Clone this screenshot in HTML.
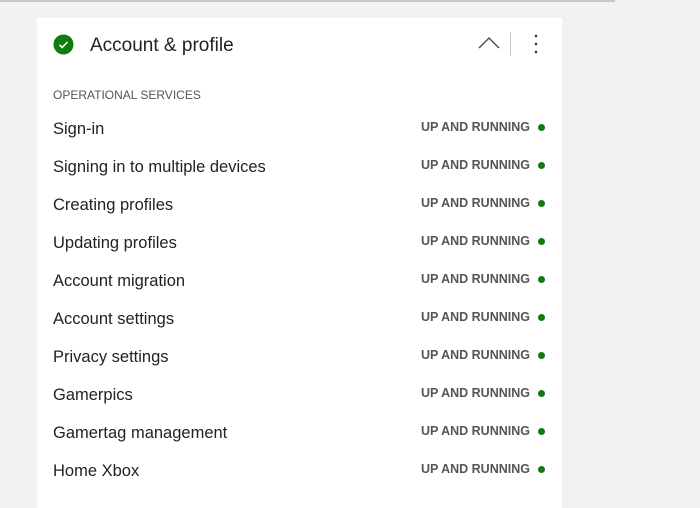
<!DOCTYPE html>
<html><head><style>
body{margin:0;width:700px;height:499px;background:#f2f2f2;font-family:"Liberation Sans",sans-serif;position:relative;overflow:hidden}
.top{position:absolute;left:0;top:0;width:615px;height:2px;background:#c8c8c8}
.card{position:absolute;left:37px;top:18px;width:525px;height:490px;background:#fff}
.title{position:absolute;left:53px;top:17px;font-size:19px;color:#222}
.sec{position:absolute;left:16px;top:70px;font-size:12px;color:#555}
.row{position:absolute;left:16px;width:477px;height:20px}
.row .n{position:absolute;left:0;top:0;font-size:16.5px;color:#222}
.row .s{position:absolute;right:0;top:0;font-size:12.5px;font-weight:bold;color:#555}
.row .d{position:absolute;right:-15px;top:4px;width:7px;height:7px;border-radius:50%;background:#107c10}
</style></head><body>
<div class="top"></div>
<div class="card">
<svg style="position:absolute;left:16px;top:16px" width="21" height="21" viewBox="0 0 21 21"><circle cx="10.5" cy="10.5" r="10" fill="#107c10"/><path d="M6.5 10.8l2.7 2.7 5.3-5.5" stroke="#fff" stroke-width="1.6" fill="none"/></svg>
<div class="title">Account &amp; profile</div>
<svg style="position:absolute;left:441px;top:18px" width="22" height="14" viewBox="0 0 22 14"><path d="M1 12L11 2l10 10" stroke="#444" stroke-width="1.3" fill="none"/></svg>
<div style="position:absolute;left:473px;top:14px;width:1px;height:24px;background:#ccc"></div>
<svg style="position:absolute;left:497px;top:16px" width="4" height="20"><circle cx="2" cy="2" r="1.3" fill="#333"/><circle cx="2" cy="10" r="1.3" fill="#333"/><circle cx="2" cy="18" r="1.3" fill="#333"/></svg>
<div class="sec">OPERATIONAL SERVICES</div>
<div class="row" style="top:102px"><span class="n">Sign-in</span><span class="s">UP AND RUNNING</span><span class="d"></span></div>
<div class="row" style="top:140px"><span class="n">Signing in to multiple devices</span><span class="s">UP AND RUNNING</span><span class="d"></span></div>
<div class="row" style="top:178px"><span class="n">Creating profiles</span><span class="s">UP AND RUNNING</span><span class="d"></span></div>
<div class="row" style="top:216px"><span class="n">Updating profiles</span><span class="s">UP AND RUNNING</span><span class="d"></span></div>
<div class="row" style="top:254px"><span class="n">Account migration</span><span class="s">UP AND RUNNING</span><span class="d"></span></div>
<div class="row" style="top:292px"><span class="n">Account settings</span><span class="s">UP AND RUNNING</span><span class="d"></span></div>
<div class="row" style="top:330px"><span class="n">Privacy settings</span><span class="s">UP AND RUNNING</span><span class="d"></span></div>
<div class="row" style="top:368px"><span class="n">Gamerpics</span><span class="s">UP AND RUNNING</span><span class="d"></span></div>
<div class="row" style="top:406px"><span class="n">Gamertag management</span><span class="s">UP AND RUNNING</span><span class="d"></span></div>
<div class="row" style="top:444px"><span class="n">Home Xbox</span><span class="s">UP AND RUNNING</span><span class="d"></span></div>
</div>
</body></html>
